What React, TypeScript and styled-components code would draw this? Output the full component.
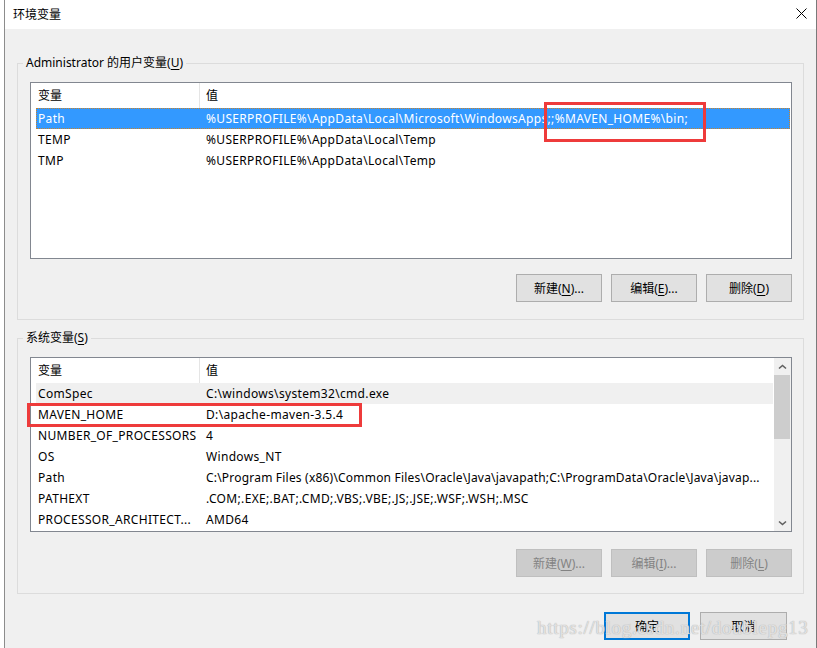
import React from 'react';
import styled, { createGlobalStyle } from 'styled-components';

const GlobalStyle = createGlobalStyle`
  html, body {
    margin: 0;
    padding: 0;
    background: #ffffff;
  }
  body {
    font-family: "Noto Sans", "Noto Sans CJK SC", sans-serif;
    font-size: 12px;
    color: #000000;
  }
`;

// Window frame
const Screen = styled.div`
  position: relative;
  width: 817px;
  height: 648px;
  overflow: hidden;
  background: #ffffff;
`;

const Dialog = styled.div`
  margin-left: 4px;
  width: 813px;
  height: 648px;
  box-sizing: border-box;
  border-left: 1px solid #8c8c8c;
  border-right: 1px solid #7a7a7a;
  display: flex;
  flex-direction: column;
`;

const TitleBar = styled.div`
  flex: none;
  height: 29px;
  display: flex;
  align-items: center;
  justify-content: space-between;
  padding: 0 9px 0 8px;
  background: #ffffff;
`;

const Title = styled.span`
  font-size: 12px;
  line-height: 16px;
`;

const CloseIcon = styled.svg`
  width: 11px;
  height: 11px;
  margin-top: -2px;
`;

const Body = styled.div`
  flex: 1;
  background: #f0f0f0;
  padding: 34px 12px 0;
`;

// Group boxes
const GroupBox = styled.div<{ $gap?: number; $bottom: number }>`
  margin-top: ${p => p.$gap ?? 0}px;
  border: 1px solid #dcdcdc;
  padding: 0 11px ${p => p.$bottom}px 12px;
`;

const GroupLabel = styled.div`
  width: fit-content;
  margin: -9px 0 11px -7px;
  padding: 0 3px;
  line-height: 16px;
  background: #f0f0f0;
`;

const Key = styled.span`
  text-decoration: underline;
  text-underline-offset: 2px;
`;

// List views
const ListView = styled.div<{ $height: number }>`
  position: relative;
  height: ${p => p.$height}px;
  box-sizing: border-box;
  border: 1px solid #828790;
  background: #ffffff;
  display: flex;
`;

const ListContent = styled.div`
  flex: 1;
  min-width: 0;
  overflow: hidden;
  letter-spacing: 0.33px;
`;

const HeaderRow = styled.div`
  display: grid;
  grid-template-columns: 168px 1px 1fr;
  height: 25px;
  align-items: center;
`;

const HeaderCell = styled.div<{ $pad: number }>`
  padding-left: ${p => p.$pad}px;
  line-height: 16px;
  letter-spacing: 0;
`;

const HeaderDivider = styled.div`
  height: 100%;
  background: #e5e5e5;
`;

const Row = styled.div<{ $state?: 'active' | 'inactive' }>`
  display: grid;
  grid-template-columns: 164px 1fr;
  height: 21px;
  align-items: center;
  margin: 0 1px 0 5px;
  box-sizing: border-box;
  background: ${p =>
    p.$state === 'active' ? '#3399ff' : p.$state === 'inactive' ? '#f0f0f0' : 'transparent'};
  color: ${p => (p.$state === 'active' ? '#ffffff' : '#000000')};
  outline: ${p => (p.$state === 'active' ? '1px dotted #c9822a' : 'none')};
  outline-offset: -1px;
`;

const Cell = styled.div<{ $pad: number; $tight?: boolean }>`
  padding-left: ${p => p.$pad}px;
  white-space: nowrap;
  overflow: hidden;
  line-height: 16px;
  ${p => (p.$tight ? 'letter-spacing: 0.2px;' : '')}
`;

// Scrollbar
const ScrollBar = styled.div`
  flex: none;
  width: 17px;
  background: #f0f0f0;
  display: flex;
  flex-direction: column;
`;

const ScrollArrow = styled.div`
  height: 17px;
  display: flex;
  align-items: center;
  justify-content: center;
`;

const ScrollTrack = styled.div`
  flex: 1;
`;

const ScrollThumb = styled.div`
  height: 64px;
  margin-right: 1px;
  background: #cdcdcd;
`;

// Annotation boxes drawn over the screenshot
const Marker = styled.div<{ $left: number; $top: number; $w: number; $h: number }>`
  position: absolute;
  left: ${p => p.$left}px;
  top: ${p => p.$top}px;
  width: ${p => p.$w}px;
  height: ${p => p.$h}px;
  box-sizing: border-box;
  border: 3px solid #ee3b3b;
  pointer-events: none;
`;

// Buttons
const ButtonRow = styled.div<{ $top: number; $gap: number; $right?: number }>`
  display: flex;
  justify-content: flex-end;
  gap: ${p => p.$gap}px;
  margin-top: ${p => p.$top}px;
  margin-right: ${p => p.$right ?? 0}px;
`;

const Button = styled.button<{ $w?: number; $primary?: boolean }>`
  width: ${p => p.$w ?? 86}px;
  height: 28px;
  box-sizing: border-box;
  padding: 0;
  font: inherit;
  font-size: 12px;
  color: #000000;
  background: #e1e1e1;
  border: ${p => (p.$primary ? '2px solid #0078d7' : '1px solid #adadad')};

  &:disabled {
    color: #838383;
    background: #cccccc;
    border-color: #bfbfbf;
  }
`;

const Watermark = styled.div`
  position: absolute;
  left: 537px;
  top: 617px;
  font-family: "Liberation Serif", serif;
  font-size: 19px;
  line-height: 22px;
  letter-spacing: 0.7px;
  color: rgba(255, 255, 255, 0.6);
  text-shadow: 0 0 1px #b4b4b4, 0 0 1px #b4b4b4;
  pointer-events: none;
`;

interface EnvVar {
  name: string;
  value: string;
  state?: 'active' | 'inactive';
  tight?: boolean;
}

const userVars: EnvVar[] = [
  { name: 'Path', value: '%USERPROFILE%\\AppData\\Local\\Microsoft\\WindowsApps;;%MAVEN_HOME%\\bin;', state: 'active' },
  { name: 'TEMP', value: '%USERPROFILE%\\AppData\\Local\\Temp' },
  { name: 'TMP', value: '%USERPROFILE%\\AppData\\Local\\Temp' },
];

const systemVars: EnvVar[] = [
  { name: 'ComSpec', value: 'C:\\windows\\system32\\cmd.exe', state: 'inactive' },
  { name: 'MAVEN_HOME', value: 'D:\\apache-maven-3.5.4' },
  { name: 'NUMBER_OF_PROCESSORS', value: '4' },
  { name: 'OS', value: 'Windows_NT' },
  {
    name: 'Path',
    value: 'C:\\Program Files (x86)\\Common Files\\Oracle\\Java\\javapath;C:\\ProgramData\\Oracle\\Java\\javap...',
    tight: true,
  },
  { name: 'PATHEXT', value: '.COM;.EXE;.BAT;.CMD;.VBS;.VBE;.JS;.JSE;.WSF;.WSH;.MSC' },
  { name: 'PROCESSOR_ARCHITECT...', value: 'AMD64' },
];

const Chevron: React.FC<{ down?: boolean }> = ({ down }) => (
  <svg width="9" height="6" viewBox="0 0 9 6">
    <path
      d={down ? 'M1 1.5 L4.5 4.5 L8 1.5' : 'M1 4.5 L4.5 1.5 L8 4.5'}
      fill="none"
      stroke="#606060"
      strokeWidth="1.6"
    />
  </svg>
);

const VarList: React.FC<{ vars: EnvVar[] }> = ({ vars }) => (
  <ListContent>
    <HeaderRow>
      <HeaderCell $pad={7}>变量</HeaderCell>
      <HeaderDivider />
      <HeaderCell $pad={6}>值</HeaderCell>
    </HeaderRow>
    {vars.map((v, i) => (
      <Row key={i} $state={v.state}>
        <Cell $pad={2}>{v.name}</Cell>
        <Cell $pad={6} $tight={v.tight}>
          {v.value}
        </Cell>
      </Row>
    ))}
  </ListContent>
);

export default function App() {
  return (
    <Screen>
      <GlobalStyle />
      <Dialog>
        <TitleBar>
          <Title>环境变量</Title>
          <CloseIcon viewBox="0 0 11 11">
            <path d="M0.5 0.5 L10.5 10.5 M10.5 0.5 L0.5 10.5" stroke="#000" strokeWidth="1" fill="none" />
          </CloseIcon>
        </TitleBar>

        <Body>
          <GroupBox $bottom={17}>
            <GroupLabel>
              Administrator 的用户变量(<Key>U</Key>)
            </GroupLabel>
            <ListView $height={177}>
              <VarList vars={userVars} />
              <Marker $left={513} $top={19} $w={162} $h={40} />
            </ListView>
            <ButtonRow $top={15} $gap={9}>
              <Button>新建(<Key>N</Key>)...</Button>
              <Button>编辑(<Key>E</Key>)...</Button>
              <Button>删除(<Key>D</Key>)</Button>
            </ButtonRow>
          </GroupBox>

          <GroupBox $gap={18} $bottom={16}>
            <GroupLabel>
              系统变量(<Key>S</Key>)
            </GroupLabel>
            <ListView $height={175}>
              <VarList vars={systemVars} />
              <ScrollBar>
                <ScrollArrow>
                  <Chevron />
                </ScrollArrow>
                <ScrollTrack>
                  <ScrollThumb />
                </ScrollTrack>
                <ScrollArrow>
                  <Chevron down />
                </ScrollArrow>
              </ScrollBar>
              <Marker $left={-4} $top={45} $w={335} $h={24} />
            </ListView>
            <ButtonRow $top={17} $gap={9}>
              <Button disabled>新建(<Key>W</Key>)...</Button>
              <Button disabled>编辑(<Key>I</Key>)...</Button>
              <Button disabled>删除(<Key>L</Key>)</Button>
            </ButtonRow>
          </GroupBox>

          <ButtonRow $top={18} $gap={10} $right={17}>
            <Button $primary>确定</Button>
            <Button $w={87}>取消</Button>
          </ButtonRow>
        </Body>
      </Dialog>
      <Watermark>https://blog.csdn.net/doublepg13</Watermark>
    </Screen>
  );
}
